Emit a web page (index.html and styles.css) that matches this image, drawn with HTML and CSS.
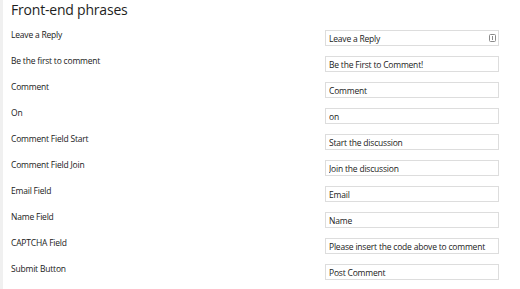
FILE: index.html
```html
<!DOCTYPE html>
<html lang="en">
<head>
    <meta charset="UTF-8">
    <title>Front-end phrases</title>
    <link rel="stylesheet" href="styles.css">
</head>
<body>
    <div class="wrap">
        <h2>Front-end phrases</h2>

        <div class="phrases">
            <div class="row">
                <label for="p1">Leave a Reply</label>
                <div class="field">
                    <input type="text" id="p1" value="Leave a Reply">
                    <svg class="field-icon" width="7" height="8" viewBox="0 0 7 8">
                        <rect x="0.5" y="0.5" width="6" height="7" rx="1" fill="none" stroke="#8a8a8a"/>
                        <rect x="3" y="2" width="1" height="4" fill="#8a8a8a"/>
                    </svg>
                </div>
            </div>
            <div class="row">
                <label for="p2">Be the first to comment</label>
                <div class="field"><input type="text" id="p2" value="Be the First to Comment!"></div>
            </div>
            <div class="row">
                <label for="p3">Comment</label>
                <div class="field"><input type="text" id="p3" value="Comment"></div>
            </div>
            <div class="row">
                <label for="p4">On</label>
                <div class="field"><input type="text" id="p4" value="on"></div>
            </div>
            <div class="row">
                <label for="p5">Comment Field Start</label>
                <div class="field"><input type="text" id="p5" value="Start the discussion"></div>
            </div>
            <div class="row">
                <label for="p6">Comment Field Join</label>
                <div class="field"><input type="text" id="p6" value="Join the discussion"></div>
            </div>
            <div class="row">
                <label for="p7">Email Field</label>
                <div class="field"><input type="text" id="p7" value="Email"></div>
            </div>
            <div class="row">
                <label for="p8">Name Field</label>
                <div class="field"><input type="text" id="p8" value="Name"></div>
            </div>
            <div class="row">
                <label for="p9">CAPTCHA Field</label>
                <div class="field"><input type="text" id="p9" value="Please insert the code above to comment"></div>
            </div>
            <div class="row">
                <label for="p10">Submit Button</label>
                <div class="field"><input type="text" id="p10" value="Post Comment"></div>
            </div>
        </div>
    </div>
</body>
</html>
```

FILE: styles.css
```css
* {
    box-sizing: border-box;
    margin: 0;
    padding: 0;
}

body {
    font-family: 'Open Sans', Arial, sans-serif;
    background-color: #fff;
    color: #1e1e1e;
}

.wrap {
    min-height: 289px;
    border-left: 3px solid #f0f0f0;
    padding-left: 8px;
}

h2 {
    font-size: 14px;
    font-weight: 400;
    line-height: 19px;
    letter-spacing: -0.2px;
    color: #1e1e1e;
}

.phrases {
    padding-top: 9px;
}

.row {
    display: grid;
    grid-template-columns: 314px 174px;
    height: 26px;
}

label {
    font-size: 8.5px;
    line-height: 14px;
    letter-spacing: -0.2px;
    color: #1a1a1a;
}

.field {
    position: relative;
    margin-top: 2px;
}

input {
    display: block;
    width: 100%;
    height: 16px;
    padding: 0 3px;
    border: 1px solid #ddd;
    font-family: 'Open Sans', Arial, sans-serif;
    font-size: 8.5px;
    letter-spacing: -0.2px;
    color: #222;
    background-color: #fff;
    outline: none;
}

.field-icon {
    position: absolute;
    right: 3px;
    top: 4px;
}
```
